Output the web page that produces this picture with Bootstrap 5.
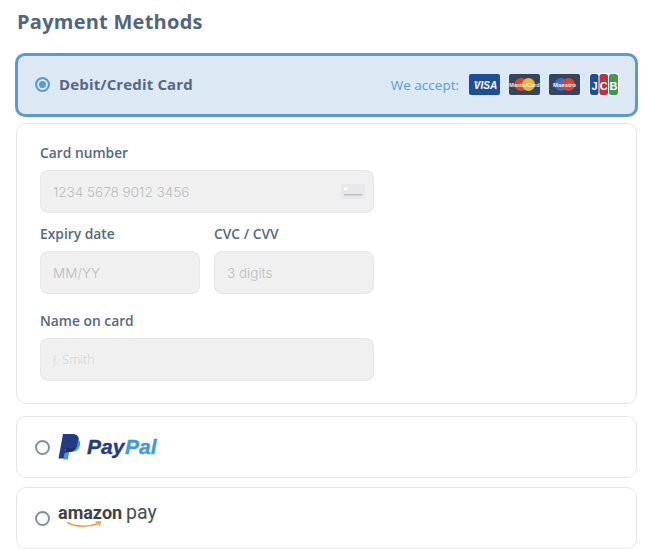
<!DOCTYPE html>
<html lang="en">
<head>
  <meta charset="UTF-8">
  <title>Payment Methods</title>
  <meta name="viewport" content="width=device-width, initial-scale=1">
  <link href="https://cdn.jsdelivr.net/npm/bootstrap@5.3.0/dist/css/bootstrap.min.css" rel="stylesheet">
  <style>
    body {
      background: #fff;
      font-family: "Open Sans", sans-serif;
      color: #51667b;
    }
    .pay-page {
      padding: 0 12px 0 15px;
    }
    .pay-title {
      font-family: "Open Sans", sans-serif;
      font-size: 20px;
      line-height: 27px;
      font-weight: 700;
      letter-spacing: .25px;
      color: #51667b;
      margin: 0 0 0 2px;
      padding: 8px 0 18px;
    }
    .method-box {
      border: 1px solid #e6e6e6;
      border-radius: 10px;
      margin: 0 1px;
      background: #fff;
    }
    .method-row {
      height: 62px;
      padding-left: 18px;
      margin-bottom: 9px;
    }
    .method-active {
      height: 64px;
      margin: 0 0 6px;
      border: 3px solid #5b9acf;
      background: #dce8f4;
      padding-left: 17px;
      padding-right: 16px;
      padding-bottom: 2px;
    }
    .method-form {
      padding: 19px 23px 22px;
      margin-bottom: 12px;
    }
    .method-title {
      font-size: 15px;
      font-weight: 700;
      color: #54697e;
      letter-spacing: .15px;
      margin-left: 9px;
    }
    .accept-text {
      font-size: 13.5px;
      color: #5f9bcf;
      padding-top: 2px;
    }
    .pay-radio.form-check-input {
      width: 15px;
      height: 15px;
      margin: 0;
      flex-shrink: 0;
      border: 2px solid #7f91a1;
      background-color: #fff;
    }
    .pay-radio.form-check-input:checked {
      background-image: none;
      background-color: #5b9acf;
      border-color: #5b9acf;
      box-shadow: inset 0 0 0 2px #dce8f4;
    }
    .field-wrap {
      width: 334px;
    }
    .field-grid {
      display: grid;
      grid-template-columns: 160px 160px;
      column-gap: 14px;
      margin-top: 11px;
    }
    .field-name {
      margin-top: 17px;
    }
    .field-label {
      display: block;
      font-size: 13.8px;
      line-height: 20px;
      font-weight: 600;
      color: #54697e;
      margin-bottom: 7px;
    }
    .field-input.form-control {
      height: 43px;
      padding: 0 12px;
      font-family: Inter, sans-serif;
      font-size: 13.5px;
      font-weight: 300;
      background: #f0f0f0;
      border: 1px solid #e6e6e6;
      border-radius: 8px;
    }
    .field-input.form-control::placeholder {
      color: #b9bcbf;
      opacity: 1;
    }
    .field-small.form-control {
      font-family: "Open Sans", sans-serif;
      font-size: 12.5px;
    }
    .field-small.form-control::placeholder {
      color: #cfd1d3;
    }
    .card-hint {
      position: absolute;
      right: 9px;
      top: 14px;
    }
    .logo-gap {
      margin-left: 10px;
    }
  </style>
</head>
<body>
  <div class="pay-page">
    <h1 class="pay-title">Payment Methods</h1>

    <div class="method-box method-active d-flex align-items-center">
      <input class="form-check-input pay-radio" type="radio" name="payMethod" checked>
      <span class="method-title">Debit/Credit Card</span>
      <span class="accept-text ms-auto">We accept:</span>
      <div class="d-flex align-items-center logo-gap" style="gap:9px">
        <svg width="31" height="21" viewBox="0 0 31 21">
          <rect width="31" height="21" rx="2" fill="#1f4e98"/>
          <path d="M5.500 7.500h3.500l.8 2.500z" fill="#e0a33c"/>
          <text x="16.500" y="14.500" text-anchor="middle" font-family="Liberation Sans" font-size="10" font-weight="700" font-style="italic" fill="#fff">VISA</text>
        </svg>
        <svg width="31" height="21" viewBox="0 0 31 21">
          <rect width="31" height="21" rx="2" fill="#35465c"/>
          <circle cx="12" cy="10.500" r="6.500" fill="#d5482f"/>
          <circle cx="19.500" cy="10.500" r="6.500" fill="#eeb53c"/>
          <text x="15.500" y="12.500" text-anchor="middle" font-family="Liberation Sans" font-size="5.500" font-weight="700" fill="#f6eee0">MasterCard</text>
        </svg>
        <svg width="31" height="21" viewBox="0 0 31 21">
          <rect width="31" height="21" rx="2" fill="#35465c"/>
          <circle cx="12" cy="10.500" r="6.500" fill="#3d6cc4"/>
          <circle cx="19.500" cy="10.500" r="6.500" fill="#d5482f"/>
          <text x="15.500" y="12.500" text-anchor="middle" font-family="Liberation Sans" font-size="6" font-weight="700" fill="#f3f0f0">Maestro</text>
        </svg>
        <svg width="30" height="23" viewBox="0 0 30 23">
          <rect width="30" height="23" rx="2" fill="#fff"/>
          <rect x="1" y="1" width="8.500" height="21" rx="2.500" fill="#1d4f9c"/>
          <rect x="10.500" y="1" width="8.500" height="21" rx="2.500" fill="#c0303f"/>
          <rect x="20" y="1" width="9" height="21" rx="2.500" fill="#3f9b4a"/>
          <text x="5.500" y="16.500" text-anchor="middle" font-family="Liberation Sans" font-size="11" font-weight="700" fill="#fff">J</text>
          <text x="14.800" y="16.500" text-anchor="middle" font-family="Liberation Sans" font-size="11" font-weight="700" fill="#fff">C</text>
          <text x="24.500" y="16.500" text-anchor="middle" font-family="Liberation Sans" font-size="11" font-weight="700" fill="#fff">B</text>
        </svg>
      </div>
    </div>

    <div class="method-box method-form">
      <div class="field-wrap">
        <label class="field-label" for="cardNumber">Card number</label>
        <div class="position-relative">
          <input class="form-control field-input" id="cardNumber" type="text" placeholder="1234 5678 9012 3456">
          <svg class="card-hint" width="24" height="15" viewBox="0 0 24 15">
            <rect width="24" height="15" rx="2" fill="#e6e8ea"/>
            <rect x="3" y="3" width="3" height="3" fill="#fff"/>
            <rect x="3" y="10" width="18" height="1.500" fill="#b9bfc5"/>
          </svg>
        </div>
        <div class="field-grid">
          <div>
            <label class="field-label" for="cardExpiry">Expiry date</label>
            <input class="form-control field-input" id="cardExpiry" type="text" placeholder="MM/YY">
          </div>
          <div>
            <label class="field-label" for="cardCvc">CVC / CVV</label>
            <input class="form-control field-input" id="cardCvc" type="text" placeholder="3 digits">
          </div>
        </div>
        <div class="field-name">
          <label class="field-label" for="cardName">Name on card</label>
          <input class="form-control field-input field-small" id="cardName" type="text" placeholder="J. Smith">
        </div>
      </div>
    </div>

    <div class="method-box method-row d-flex align-items-center">
      <input class="form-check-input pay-radio" type="radio" name="payMethod">
      <svg class="ms-2" width="100" height="26" viewBox="0 0 100 26">
        <path d="M5 0h9c5 0 7.500 2.500 6.600 6.800-1 5-4.500 7.700-9.500 7.700H8L6 24.500H.5z" fill="#253b80"/>
        <path d="M20 5.500c2 1 2.600 3 2 5.600-1 4.500-4 6.900-8.500 6.900h-2.300l-1.400 7.500H5.400l.6-3.500 2-8h3.500c5 0 8.500-2.800 8.500-8.500z" fill="#3f9bd8"/>
        <path d="M20 5.500c.5 4.700-3.500 8.500-8.500 8.500H8l-1 5c2-.8 3.500-1.200 4.500-1 5 .2 8.500-5 8.500-12.500z" fill="#1f2f6e"/>
        <text x="29" y="20" font-family="Liberation Sans" font-size="21" font-weight="700" font-style="italic" fill="#253b80" stroke="#253b80" stroke-width=".4">Pay</text>
        <text x="67" y="20" font-family="Liberation Sans" font-size="21" font-weight="700" font-style="italic" fill="#3f9bd8" stroke="#3f9bd8" stroke-width=".4">Pal</text>
      </svg>
    </div>

    <div class="method-box method-row d-flex align-items-center">
      <input class="form-check-input pay-radio" type="radio" name="payMethod">
      <svg class="ms-2" width="106" height="32" viewBox="0 0 106 32">
        <text x="0" y="17" font-family="Roboto" font-size="18" font-weight="700" fill="#3c4347">amazon</text>
        <text x="68" y="17" font-family="Roboto" font-size="19.500" fill="#454c50">pay</text>
        <path d="M9 20.500c9 4.800 22 4.800 32 .8" fill="none" stroke="#ee9f35" stroke-width="1.500"/>
        <path d="M37.500 20h5l-1.500 4" fill="none" stroke="#ee9f35" stroke-width="1.300"/>
      </svg>
    </div>
  </div>

  <script src="https://cdn.jsdelivr.net/npm/bootstrap@5.3.0/dist/js/bootstrap.bundle.min.js"></script>
</body>
</html>
